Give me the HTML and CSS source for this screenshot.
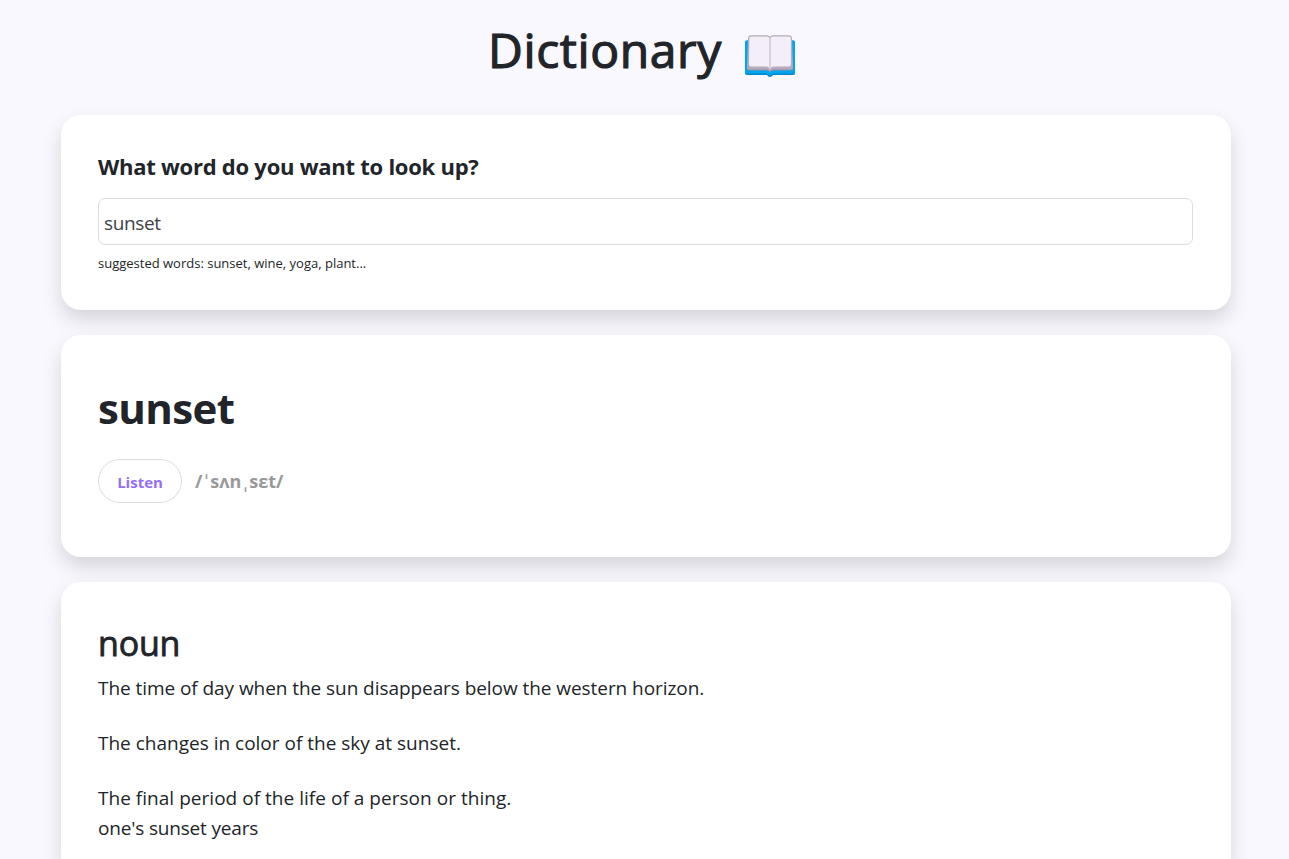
FILE: index.html
```html
<!DOCTYPE html>
<html lang="en">
<head>
<meta charset="utf-8">
<title>Dictionary</title>
<link rel="stylesheet" href="styles.css">
</head>
<body>
<main class="container">
  <h1 class="title"><span class="title-text">Dictionary</span>
    <svg class="book" viewBox="0 0 50 42" aria-hidden="true">
      <path fill="#0087d0" d="M2 5.500h46a2 2 0 0 1 2 2V38a2 2 0 0 1-2 2H28q-1 2-3 2t-3-2H2a2 2 0 0 1-2-2V7.500a2 2 0 0 1 2-2z"/>
      <path fill="#00a6ed" d="M2 5.500h46a2 2 0 0 1 2 2V36.500a2 2 0 0 1-2 2H28q-1 2-3 2t-3-2H2a2 2 0 0 1-2-2V7.500a2 2 0 0 1 2-2z"/>
      <path fill="#998ea4" d="M2 32h46v1.500a2 2 0 0 1-2 2H27.500L25 37l-2.500-1.500H4a2 2 0 0 1-2-2z"/>
      <path fill="#b4acbc" d="M5.500.3H22q2 0 3 1.500 1-1.500 3-1.500h16.500a3 3 0 0 1 2.500 3L48 32.500a2 2 0 0 1-2 2H27.500L25 36l-2.500-1.500H4a2 2 0 0 1-2-2L3 3.300a3 3 0 0 1 2.500-3z"/>
      <path fill="#f3eef8" d="M6 1.400h15.500q2.500.1 3.500 2 1-1.900 3.500-2H44q1.700.1 1.900 2V29.500q0 2-2 2H28.500Q26 31.700 25 34.500q-1-2.800-3.500-3H6q-2 0-2-2L4.300 3.400q.1-1.900 1.700-2z"/>
      <path fill="#cdc4d6" d="M24.300 3h1.400v31h-1.400z"/>
    </svg>
  </h1>

  <section class="card search">
    <label class="question" for="word"><span class="question-text">What word do you want to look up?</span></label>
    <input class="word-input" id="word" type="text" value="sunset">
    <small class="hint"><span>suggested words: sunset, wine, yoga, plant...</span></small>
  </section>

  <section class="card result">
    <h2 class="word"><span>sunset</span></h2>
    <div class="phonetic">
      <button class="listen" type="button"><span>Listen</span></button>
      <span class="ipa">/<span class="stress">ˈ</span>sʌn<span class="stress">ˌ</span>sɛt/</span>
    </div>
  </section>

  <section class="card meaning">
    <h3 class="part"><span>noun</span></h3>
    <p class="definition"><span class="first">The time of day when the sun disappears below the western horizon.</span></p>
    <p class="definition"><span>The changes in color of the sky at sunset.</span></p>
    <p class="definition"><span class="third">The final period of the life of a person or thing.</span><br><span class="example">one's sunset years</span></p>
  </section>
</main>
</body>
</html>
```
FILE: styles.css
```css
* {
  box-sizing: border-box;
}

body {
  margin: 0;
  background: #f9f8ff;
  color: #212529;
  font-family: "Open Sans", "Noto Sans", "DejaVu Sans", sans-serif;
  font-size: 19px;
  line-height: 30px;
}

h1, h2, h3, p {
  margin: 0;
}

.container {
  display: flex;
  flex-direction: column;
  gap: 25px;
  width: 1170px;
  height: 859px;
  margin-left: 61px;
}

.title {
  display: flex;
  justify-content: center;
  height: 90px;
  padding-top: 20px;
  gap: 23px;
  margin-right: 9px;
  font-size: 48px;
  font-weight: 500;
  line-height: 60px;
}

.title-text {
  letter-spacing: 0.6px;
  -webkit-text-stroke: 1.2px #212529;
}

.book {
  width: 50px;
  height: 42px;
  margin-top: 15px;
}

.card {
  flex: none;
  padding: 37px;
  border-radius: 20px;
  background: #fff;
  box-shadow: 0 10px 20px rgba(0, 0, 0, 0.14);
}

.search {
  display: flex;
  flex-direction: column;
  height: 195px;
  padding: 36px 38px 36px 37px;
}

.question {
  height: 47px;
  font-size: 22px;
  font-weight: 700;
  letter-spacing: -0.25px;
}

.word-input {
  width: 100%;
  height: 47px;
  padding: 3px 5px 0;
  border: 1px solid #dcdcdc;
  border-radius: 7px;
  color: #3e4145;
  font: inherit;
  letter-spacing: -0.35px;
}

.hint {
  padding-top: 8px;
  font-size: 13px;
  line-height: 20px;
}

.result {
  height: 222px;
}

.word {
  padding-top: 6px;
  font-size: 42px;
  font-weight: 700;
  letter-spacing: -0.6px;
  line-height: 60px;
}

.phonetic {
  display: flex;
  align-items: center;
  gap: 13px;
  margin-top: 21px;
}

.listen {
  width: 84px;
  height: 44px;
  padding: 1px 0 0;
  border: 1px solid #dcdcdc;
  border-radius: 22px;
  background: #fff;
  color: #946ff5;
  font-family: inherit;
  font-size: 15px;
  font-weight: 700;
}

.ipa {
  color: #999;
  font-size: 18px;
  font-weight: 700;
}

.stress {
  padding: 0 2.5px;
  font-weight: 400;
}

.meaning {
  flex: 1 1 0;
  border-radius: 20px 20px 0 0;
  padding-bottom: 0;
}

.part {
  height: 54px;
  font-size: 34px;
  line-height: 48px;
  font-weight: 500;
  letter-spacing: -0.2px;
  -webkit-text-stroke: 0.8px #212529;
}

.definition + .definition {
  margin-top: 25px;
}

.first {
  letter-spacing: -0.06px;
}

.third {
  letter-spacing: 0.03px;
}

.example {
  letter-spacing: -0.17px;
}
```
